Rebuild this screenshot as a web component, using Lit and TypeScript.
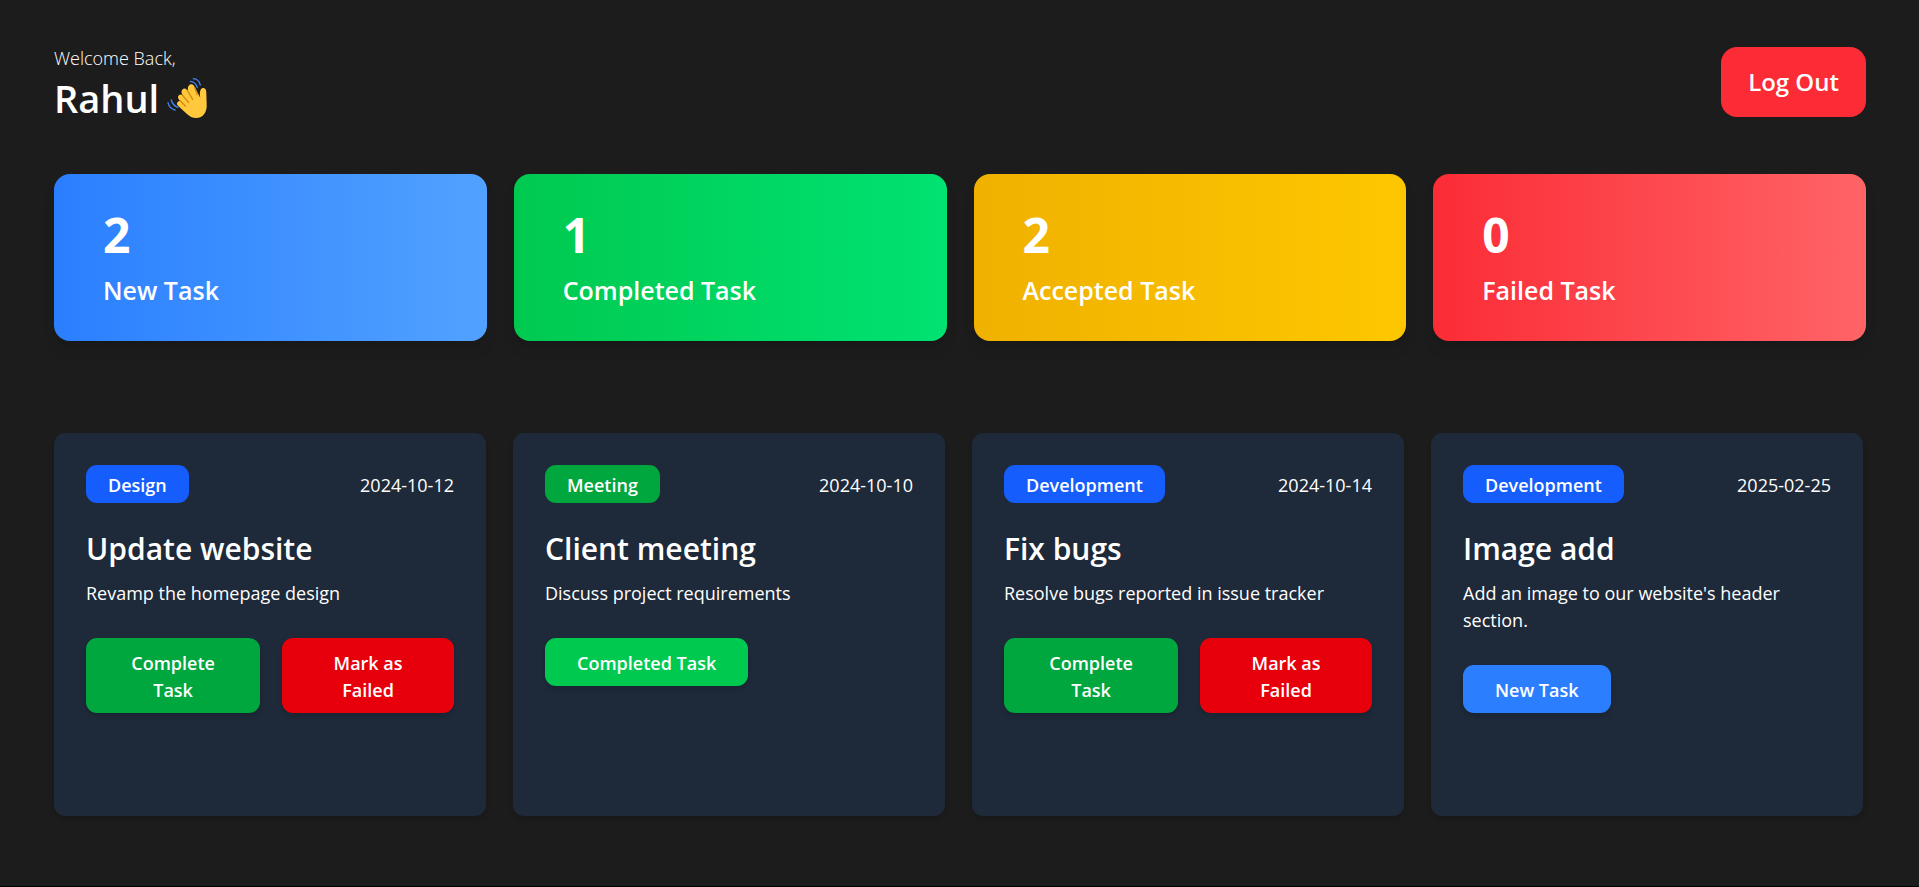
import { LitElement, html, css, nothing } from "lit";
import { customElement, property, state } from "lit/decorators.js";
import { classMap } from "lit/directives/class-map.js";

type Status = "accepted" | "completed" | "new";

interface Task {
  category: string;
  date: string;
  title: string;
  description: string;
  status: Status;
}

interface Stat {
  count: number;
  label: string;
  tone: string;
}

@customElement("waving-hand")
class WavingHand extends LitElement {
  static styles = css`
    :host {
      display: inline-flex;
    }
    .hand {
      width: 42px;
      height: 42px;
    }
    .skin {
      fill: #ffc83d;
    }
    .crease {
      fill: none;
      stroke: #d98a0b;
      stroke-width: 4;
      stroke-linecap: round;
    }
    .motion {
      fill: none;
      stroke: #3f83ee;
      stroke-width: 4;
      stroke-linecap: round;
    }
  `;

  render() {
    return html`
      <svg class="hand" viewBox="15 15 126 126" role="img" aria-label="Waving hand">
        <path
          class="skin"
          d="M118 78 C115 64 117 49 126 48 C134 48 136 55 136 64 L137 96 C139 120 126 138 106 138
             C94 138 86 133 77 125 L51 101 C47 97 47 92 51 89 C53 87 56 87 58 88
             L54 83 C50 78 50 73 54 70 C57 67 61 67 65 71
             L63 66 C61 61 61 56 64 53 C68 48 74 49 77 53
             L81 58 C80 50 80 42 86 38 C92 35 97 37 100 43 Z"
        />
        <path class="crease" d="M58 87 L73 102" />
        <path class="crease" d="M64 69 L83 92" />
        <path class="crease" d="M79 55 L95 82" />
        <path class="crease" d="M101 47 L109 68" />
        <path class="motion" d="M97 20 Q113 21 118 39" />
        <path class="motion" d="M88 28 Q104 29 109 47" />
        <path class="motion" d="M21 92 Q25 110 42 114" />
        <path class="motion" d="M31 84 Q35 101 51 106" />
      </svg>
    `;
  }
}

@customElement("stat-card")
class StatCard extends LitElement {
  @property({ type: Number }) count = 0;
  @property() label = "";
  @property() tone = "blue";

  static styles = css`
    :host {
      display: block;
    }
    .card {
      display: flex;
      flex-direction: column;
      gap: 12px;
      padding: 36px 49px 33px;
      border-radius: 16px;
      box-shadow: 0 10px 15px -3px rgb(0 0 0 / 10%), 0 4px 6px -4px rgb(0 0 0 / 10%);
    }
    .blue {
      background: linear-gradient(to right, #2b7fff, #51a2ff);
    }
    .green {
      background: linear-gradient(to right, #00c950, #00e272);
    }
    .yellow {
      background: linear-gradient(to right, #f0b100, #fdc700);
    }
    .red {
      background: linear-gradient(to right, #fb2c36, #ff6467);
    }
    .count,
    .label {
      margin: 0;
    }
    .count {
      font-size: 48px;
      line-height: 50px;
      font-weight: 700;
    }
    .label {
      font-size: 25px;
      line-height: 36px;
      font-weight: 600;
    }
  `;

  render() {
    return html`
      <div class=${classMap({ card: true, [this.tone]: true })}>
        <h2 class="count">${this.count}</h2>
        <h3 class="label">${this.label}</h3>
      </div>
    `;
  }
}

@customElement("task-card")
class TaskCard extends LitElement {
  @property({ attribute: false }) task!: Task;

  static styles = css`
    :host {
      display: flex;
    }
    .card {
      flex: 1;
      box-sizing: border-box;
      min-height: 383px;
      padding: 32px;
      border-radius: 11px;
      background: #1e2939;
      box-shadow: 0 4px 6px -1px rgb(0 0 0 / 10%), 0 2px 4px -2px rgb(0 0 0 / 10%);
    }
    .top {
      display: flex;
      justify-content: space-between;
      align-items: center;
      line-height: 28px;
    }
    .tag {
      padding: 6px 22px 4px;
      border-radius: 11px;
      background: #155dfc;
      font-weight: 600;
    }
    .tag.meeting {
      background: #00a63e;
    }
    .date {
      padding: 6px 0 4px;
    }
    .title {
      margin: 26px 0 11px;
      font-size: 30px;
      line-height: 40px;
      font-weight: 600;
    }
    .description {
      margin: 0;
    }
    .actions {
      display: flex;
      gap: 22px;
      margin-top: 31px;
    }
    .action {
      padding: 12px 32px 9px;
      border: 0;
      border-radius: 11px;
      font: inherit;
      font-weight: 600;
      color: inherit;
      cursor: pointer;
      box-shadow: 0 4px 6px -1px rgb(0 0 0 / 10%), 0 2px 4px -2px rgb(0 0 0 / 10%);
    }
    .complete {
      background: #00a63e;
    }
    .fail {
      background: #e7000b;
    }
    .done {
      background: #00c950;
    }
    .fresh {
      background: #2b7fff;
    }
  `;

  private renderActions(status: Status) {
    switch (status) {
      case "accepted":
        return html`
          <button class="action complete" type="button">Complete Task</button>
          <button class="action fail" type="button">Mark as Failed</button>
        `;
      case "completed":
        return html`<button class="action done" type="button">Completed Task</button>`;
      case "new":
        return html`<button class="action fresh" type="button">New Task</button>`;
      default:
        return nothing;
    }
  }

  render() {
    const { category, date, title, description, status } = this.task;
    return html`
      <article class="card">
        <div class="top">
          <span class=${classMap({ tag: true, meeting: category === "Meeting" })}>${category}</span>
          <time class="date" datetime=${date}>${date}</time>
        </div>
        <h2 class="title">${title}</h2>
        <p class="description">${description}</p>
        <div class="actions">${this.renderActions(status)}</div>
      </article>
    `;
  }
}

@customElement("app-root")
class AppRoot extends LitElement {
  @state() private stats: Stat[] = [
    { count: 2, label: "New Task", tone: "blue" },
    { count: 1, label: "Completed Task", tone: "green" },
    { count: 2, label: "Accepted Task", tone: "yellow" },
    { count: 0, label: "Failed Task", tone: "red" },
  ];

  @state() private tasks: Task[] = [
    {
      category: "Design",
      date: "2024-10-12",
      title: "Update website",
      description: "Revamp the homepage design",
      status: "accepted",
    },
    {
      category: "Meeting",
      date: "2024-10-10",
      title: "Client meeting",
      description: "Discuss project requirements",
      status: "completed",
    },
    {
      category: "Development",
      date: "2024-10-14",
      title: "Fix bugs",
      description: "Resolve bugs reported in issue tracker",
      status: "accepted",
    },
    {
      category: "Development",
      date: "2025-02-25",
      title: "Image add",
      description: "Add an image to our website's header section.",
      status: "new",
    },
  ];

  static styles = css`
    :host {
      display: block;
      box-sizing: border-box;
      min-height: 100vh;
      padding: 47px 53px 54px 54px;
      border-bottom: 1px solid #000;
      background: #1c1c1c;
      color: #fff;
      font-family: "Segoe UI", "Open Sans", "Noto Sans", sans-serif;
      font-size: 18px;
      line-height: 27px;
    }
    .header {
      display: flex;
      justify-content: space-between;
      align-items: flex-start;
    }
    .greeting {
      display: flex;
      flex-direction: column;
      gap: 5px;
      margin: 0;
      font-size: 18px;
      line-height: 22px;
      font-weight: 300;
    }
    .name {
      display: flex;
      align-items: center;
      gap: 7px;
      font-size: 38px;
      line-height: 48px;
      font-weight: 600;
    }
    .logout {
      padding: 18px 27px;
      border: 0;
      border-radius: 16px;
      background: #fb2c36;
      color: inherit;
      font-family: inherit;
      font-size: 24px;
      line-height: 34px;
      font-weight: 600;
      cursor: pointer;
    }
    .row {
      display: grid;
      grid-template-columns: repeat(4, minmax(0, 1fr));
      gap: 27px;
    }
    .stats {
      margin-top: 52px;
    }
    .tasks {
      margin: 92px 3px 0 0;
    }
  `;

  render() {
    return html`
      <header class="header">
        <h1 class="greeting">
          Welcome Back,
          <span class="name">Rahul <waving-hand></waving-hand></span>
        </h1>
        <button class="logout" type="button">Log Out</button>
      </header>
      <section class="row stats" aria-label="Task summary">
        ${this.stats.map(
          (s) => html`<stat-card .count=${s.count} .label=${s.label} .tone=${s.tone}></stat-card>`
        )}
      </section>
      <section class="row tasks" aria-label="Tasks">
        ${this.tasks.map((t) => html`<task-card .task=${t}></task-card>`)}
      </section>
    `;
  }
}
